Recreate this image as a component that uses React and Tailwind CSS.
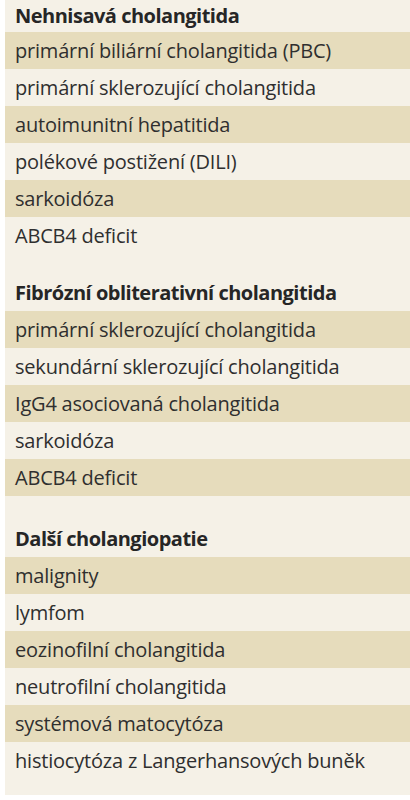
import React from "react";

const sections = [
  {
    title: "Nehnisavá cholangitida",
    items: [
      "primární biliární cholangitida (PBC)",
      "primární sklerozující cholangitida",
      "autoimunitní hepatitida",
      "polékové postižení (DILI)",
      "sarkoidóza",
      "ABCB4 deficit",
    ],
  },
  {
    title: "Fibrózní obliterativní cholangitida",
    items: [
      "primární sklerozující cholangitida",
      "sekundární sklerozující cholangitida",
      "IgG4 asociovaná cholangitida",
      "sarkoidóza",
      "ABCB4 deficit",
    ],
  },
  {
    title: "Další cholangiopatie",
    items: [
      "malignity",
      "lymfom",
      "eozinofilní cholangitida",
      "neutrofilní cholangitida",
      "systémová matocytóza",
      "histiocytóza z Langerhansových buněk",
    ],
  },
];

function Section({ title, items, first }) {
  return (
    <div>
      <div
        className={`flex items-center px-[10px] font-bold tracking-[-0.5px] text-[#262626] ${
          first ? "h-[32px]" : "h-[37px]"
        }`}
      >
        {title}
      </div>
      {items.map((item, i) => (
        <div
          key={i}
          className={`flex items-center h-[37px] px-[10px] tracking-[-0.2px] text-[#2f2f2f] ${
            i % 2 === 0 ? "bg-[#e6dcbc]" : "bg-[#f5f1e7]"
          }`}
        >
          {item}
        </div>
      ))}
    </div>
  );
}

export default function App() {
  return (
    <div className="w-[410px] h-[800px] bg-white pl-[5px]">
      <div
        className="h-[795px] bg-[#f5f1e7] text-[20px] leading-none"
        style={{ fontFamily: "'Open Sans', Lato, sans-serif" }}
      >
        <Section {...sections[0]} first />
        <div className="h-[20px]" />
        <Section {...sections[1]} />
        <div className="h-[24px]" />
        <Section {...sections[2]} />
      </div>
    </div>
  );
}
